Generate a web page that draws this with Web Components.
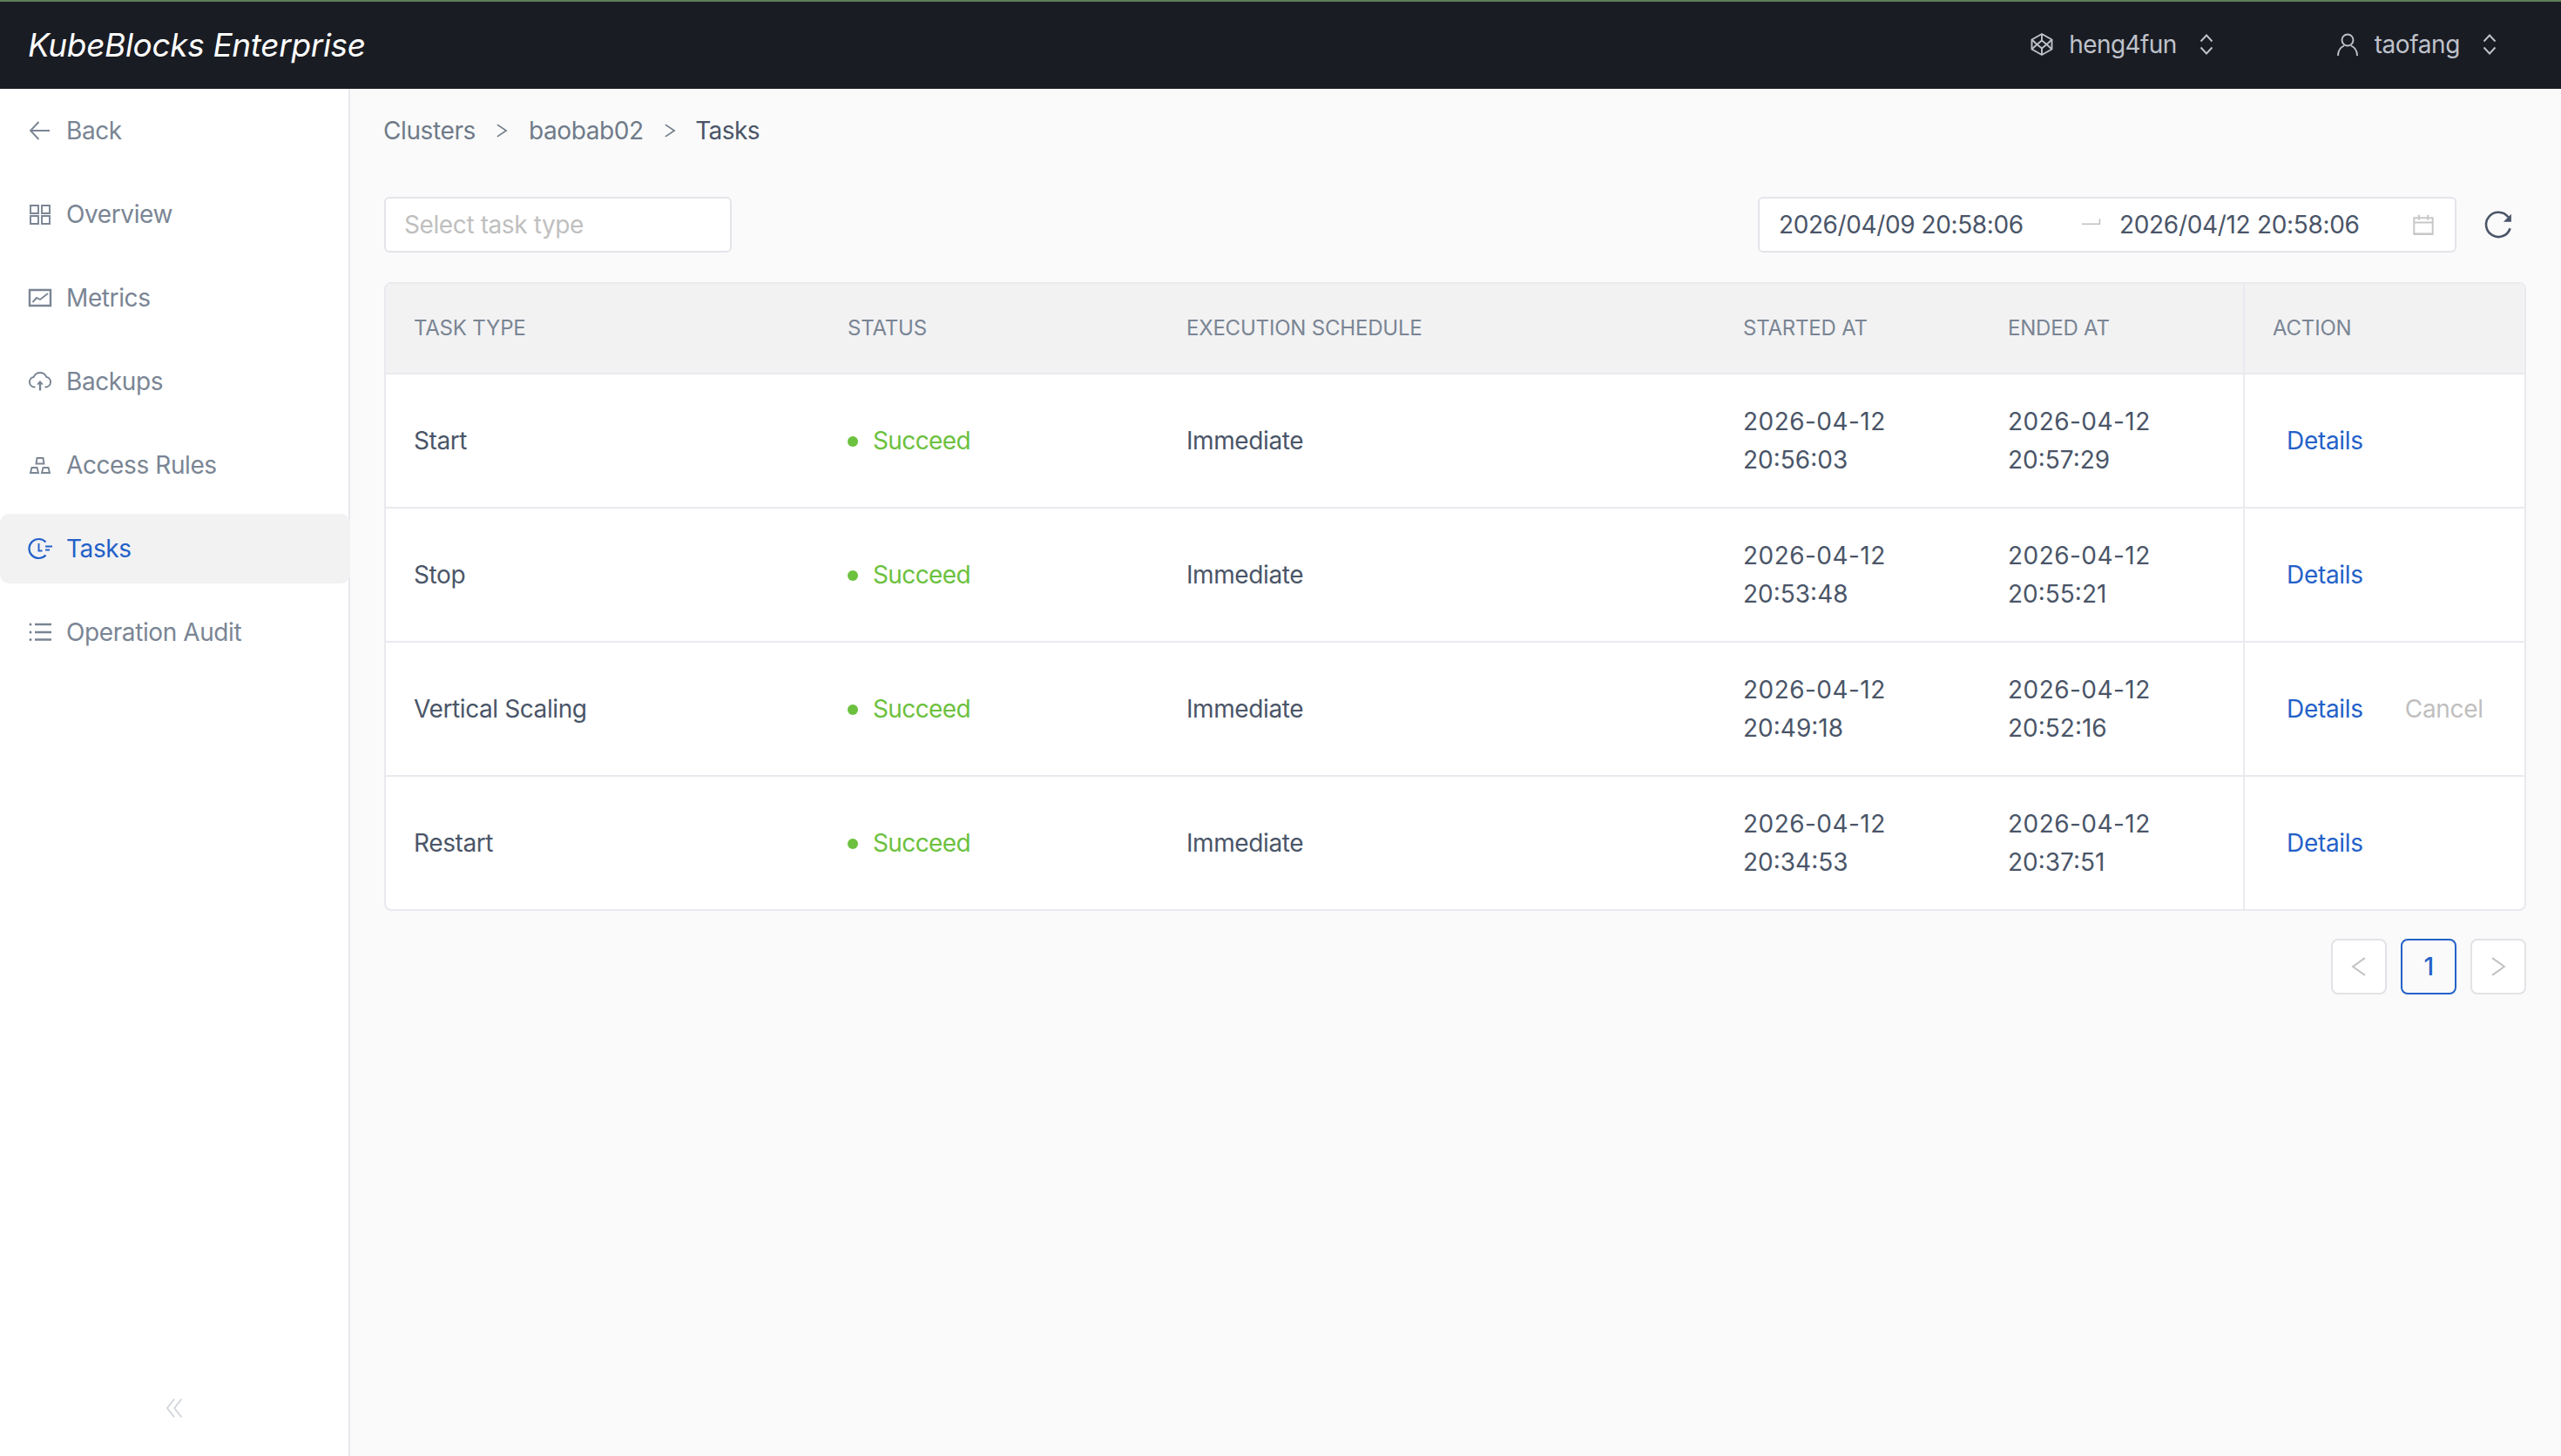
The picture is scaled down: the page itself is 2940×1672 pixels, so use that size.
<!DOCTYPE html>
<html lang="en"><head><meta charset="utf-8"><title>KubeBlocks Enterprise</title>
<style>
html,body{margin:0;padding:0;width:2940px;height:1672px;overflow:hidden;background:#fafafa}
body{font:400 28px/44px Inter,"Liberation Sans",sans-serif;letter-spacing:-.4px;color:#4a5568;display:flex;flex-direction:column}
</style></head><body>
<kb-topbar>
  <span slot="logo">KubeBlocks Enterprise</span>
  <kb-switcher icon="cube">heng4fun</kb-switcher>
  <kb-switcher icon="user">taofang</kb-switcher>
</kb-topbar>
<kb-layout>
  <kb-sidenav slot="side">
    <kb-nav-item icon="back">Back</kb-nav-item>
    <kb-nav-item icon="grid">Overview</kb-nav-item>
    <kb-nav-item icon="chart">Metrics</kb-nav-item>
    <kb-nav-item icon="cloud">Backups</kb-nav-item>
    <kb-nav-item icon="rules">Access Rules</kb-nav-item>
    <kb-nav-item icon="tasks" active>Tasks</kb-nav-item>
    <kb-nav-item icon="list">Operation Audit</kb-nav-item>
  </kb-sidenav>
  <kb-breadcrumb>
    <span>Clusters</span><span>baobab02</span><span>Tasks</span>
  </kb-breadcrumb>
  <kb-filters>
    <kb-select>Select task type</kb-select>
    <kb-range from="2026/04/09 20:58:06" to="2026/04/12 20:58:06"></kb-range>
  </kb-filters>
  <kb-table>
    <kb-row head>
      <span>Task Type</span><span>Status</span><span>Execution Schedule</span><span>Started At</span><span>Ended At</span><span>Action</span>
    </kb-row>
    <kb-row><span>Start</span><kb-status>Succeed</kb-status><span>Immediate</span><kb-time d="2026-04-12" t="20:56:03"></kb-time><kb-time d="2026-04-12" t="20:57:29"></kb-time><kb-actions></kb-actions></kb-row>
    <kb-row><span>Stop</span><kb-status>Succeed</kb-status><span>Immediate</span><kb-time d="2026-04-12" t="20:53:48"></kb-time><kb-time d="2026-04-12" t="20:55:21"></kb-time><kb-actions></kb-actions></kb-row>
    <kb-row><span>Vertical Scaling</span><kb-status>Succeed</kb-status><span>Immediate</span><kb-time d="2026-04-12" t="20:49:18"></kb-time><kb-time d="2026-04-12" t="20:52:16"></kb-time><kb-actions cancel></kb-actions></kb-row>
    <kb-row last><span>Restart</span><kb-status>Succeed</kb-status><span>Immediate</span><kb-time d="2026-04-12" t="20:34:53"></kb-time><kb-time d="2026-04-12" t="20:37:51"></kb-time><kb-actions></kb-actions></kb-row>
  </kb-table>
  <kb-pagination></kb-pagination>
</kb-layout>
<script>
const ICONS={
 back:'<path d="M25 14H3.500M12.500 4 3 14l9.500 10"/>',
 grid:'<path d="M3 4h9v9H3zM16 4h9v9h-9zM3 16h9v9H3zM16 16h9v9h-9z"/>',
 chart:'<path d="M2 5h24v18H2z" stroke-width="2.400"/><path d="M5.500 19l4.500-5 4 2 9-7"/>',
 cloud:'<path d="M8.500 20.500H7.500a5.800 5.800 0 0 1-.8-11.500 7.800 7.800 0 0 1 14.600 0A5.800 5.800 0 0 1 20.500 20.500h-1"/><path d="M14 24.500V14" stroke-width="2.400"/><path d="M10 17.500 14 13l4 4.500z" fill="currentColor" stroke="none"/>',
 rules:'<path d="M10.500 6h7l1 6.500h-9zM3 23l1.500-6h6l1.500 6zM16 23l1.500-6h6l1.500 6z"/>',
 tasks:'<path d="M20.500 6.500A11 11 0 1 0 20.500 21.500" stroke-width="2.200"/><path d="M12.500 8v8.500h4M20 11.500h8M20 15.500h5"/>',
 list:'<path d="M8 5h19M8 14h19M8 22.500h19" stroke-width="2.400"/><circle cx="3" cy="5" r="1.500" fill="currentColor" stroke="none"/><circle cx="3" cy="14" r="1.500" fill="currentColor" stroke="none"/><circle cx="3" cy="22.500" r="1.500" fill="currentColor" stroke="none"/>',
 cube:'<path d="M14 2 25.500 8.500v11L14 26 2.500 19.500v-11z"/><path d="M14 2v7.500L8.500 14l5.500 4.500 5.500-4.500L14 9.500M2.500 8.500 8.500 14l-6 5.500M25.500 8.500l-6 5.500 6 5.500M14 18.500V26"/>',
 user:'<circle cx="14" cy="9" r="6.500"/><path d="M3 27c0-6 3.500-10 7-11.500M25 27c0-6-3.500-10-7-11.500"/>',
 updown:'<path d="M7.500 10.500 14 3.500l6.500 7M7.500 17.500l6.500 7 6.500-7"/>',
 sep:'<path d="M8 6l12 8-12 8"/>',
 calendar:'<path d="M1.500 5h25v21.500h-25z"/><path d="M1.500 11h25M8 1v7M20 1v7"/><path d="M1.500 26.500h25" stroke-width="2.800"/>',
 refresh:'<path d="M26.700 7.800A13.300 13.300 0 1 0 28.800 20" /><path d="M30 4.500V13h-8.500z" fill="currentColor" stroke="none"/>',
 rangearrow:'<path d="M1 12h24v-7"/>',
 prev:'<path d="M22 2.500 6 14l16 11.500"/>',
 next:'<path d="M6 2.500 22 14 6 25.500"/>',
 collapse:'<path d="M13 2 3.500 14 13 26M22.500 2 13 14l9.500 12"/>'
};
function icon(name,size=28,sw=1.9){const vb=name==='refresh'?32:28;return `<svg xmlns="http://www.w3.org/2000/svg" width="${size}" height="${size}" viewBox="0 0 ${vb} ${vb}" fill="none" stroke="currentColor" stroke-width="${sw*vb/size}" aria-hidden="true" style="display:block;flex:none">${ICONS[name]}</svg>`}
function def(tag,html){customElements.define(tag,class extends HTMLElement{
  connectedCallback(){if(this.shadowRoot)return;const r=this.attachShadow({mode:'open'});r.innerHTML=typeof html==='function'?html(this):html;}
})}
def('kb-topbar',`<style>
:host{display:flex;flex:none;align-items:center;height:100px;background:#1a1c23;border-top:2px solid #5e7f57}
.logo{font:italic 400 37px/1 Inter,sans-serif;color:#fff;margin-left:32px;letter-spacing:-.35px;transform:translateY(-1px)}
.right{margin-left:auto;display:flex}
</style><div class="logo"><slot name="logo"></slot></div><div class="right"><slot></slot></div>`);
def('kb-switcher',h=>`<style>
:host{display:flex;align-items:center;color:#bfc2cb;height:44px;transform:translateY(-1px)}
:host([icon=cube]){margin-right:134px;letter-spacing:-.6px}
:host([icon=user]){margin-right:68px}
.i{margin-right:17px}.c{margin-left:20px}
</style><span class="i">${icon(h.getAttribute('icon'))}</span><slot></slot><span class="c">${icon('updown')}</span>`);
def('kb-layout',`<style>
:host{display:flex;flex:1;min-height:0}
main{flex:1;min-width:0;padding:8px 40px 0 39px;display:flex;flex-direction:column}
</style><slot name="side"></slot><main><slot></slot></main>`);
def('kb-sidenav',`<style>
:host{display:flex;flex-direction:column;flex:none;width:400px;background:#fff;border-right:2px solid #e9e9ef;padding-top:8px}
nav{display:flex;flex-direction:column;gap:16px}
.collapse{margin-top:auto;display:flex;justify-content:center;padding:0 0 43px 2px;color:#d3d7dc}
</style><nav><slot></slot></nav><div class="collapse">${icon('collapse',24)}</div>`);
def('kb-nav-item',h=>`<style>
:host{display:flex;align-items:center;height:80px;padding-left:32px;gap:16px;color:#7a8594;border-radius:10px;margin-right:-2px;position:relative}
:host([active]){background:#f2f2f3;color:#2461c8}
</style>${icon(h.getAttribute('icon'))}<slot></slot>`);
def('kb-breadcrumb',h=>{[...h.children].forEach((k,i)=>k.slot='c'+i);return `<style>
:host{display:flex;align-items:center;height:80px;color:#6f7b89;margin-left:-1px}
.s{margin:0 18.500px}.s.b{margin-right:17px}.last{color:#4a5568;letter-spacing:-.6px}
</style><slot name="c0"></slot><span class="s">${icon('sep',24,1.6)}</span><slot name="c1"></slot><span class="s b">${icon('sep',24,1.6)}</span><span class="last"><slot name="c2"></slot></span>`});
def('kb-filters',`<style>:host{display:flex;align-items:center;justify-content:space-between;margin-top:36px;height:64px}</style><slot></slot>`);
def('kb-select',`<style>
:host{display:flex;align-items:center;box-sizing:border-box;width:399px;height:64px;padding-left:21px;background:#fff;border:2px solid #e4e4ea;border-radius:6px;color:#bfbfbf}
</style><slot></slot>`);
def('kb-range',h=>`<style>
:host{display:flex;align-items:center}
.box{display:flex;align-items:center;box-sizing:border-box;width:802px;height:64px;padding-left:22px;background:#fff;border:2px solid #e4e4ea;border-radius:6px;color:#4a5568}
.a{width:347px}.b{width:336px;letter-spacing:-.32px}
.arrow{color:#c2c2c2;margin-right:20px;transform:translateY(1px)}
.cal{color:#c8c8c8;margin-left:1px}
.re{width:64px;margin-left:16px;display:flex;justify-content:center;color:#4a5568}
</style><div class="box"><span class="a">${h.getAttribute('from')}</span><span class="arrow">${icon('rangearrow',24,1.6)}</span><span class="b">${h.getAttribute('to')}</span><span class="cal">${icon('calendar',24,2)}</span></div><span class="re">${icon('refresh',34,2.600)}</span>`);
def('kb-table',`<style>
:host{display:block;margin-top:34px;border:2px solid #e9e9ef;border-radius:8px;overflow:hidden;background:#fff;--cols:498px 389px 639px 304px 302px 1fr}
</style><slot></slot>`);
def('kb-row',h=>{const head=h.hasAttribute('head');[...h.children].forEach((k,i)=>k.slot='c'+i);return `<style>
:host{display:grid;grid-template-columns:var(--cols);height:${head?102:152}px;border-bottom:2px solid #e9e9ef;align-items:stretch}
:host([last]){border-bottom:0}
:host([head]){background:#f2f2f3;color:#7a8594;font-size:24px;letter-spacing:-.2px;text-transform:uppercase}
.c{display:flex;align-items:center;padding-left:32px;min-width:0}
.c.act{border-left:2px solid #e9e9ef}
</style>${[0,1,2,3,4,5].map(i=>`<div class="c${i==5?' act':''}"><div><slot name="c${i}"></slot></div></div>`).join('')}`});
def('kb-time',h=>`<style>
:host{display:block}
.d{display:block;letter-spacing:.45px}.t{display:block;letter-spacing:0}
</style><span class="d">${h.getAttribute('d')}</span><span class="t">${h.getAttribute('t')}</span>`);
def('kb-status',`<style>
:host{display:flex;align-items:center;color:#6cc13e;letter-spacing:-.6px}
i{width:12px;height:12px;border-radius:50%;background:#6cc13e;margin-right:17px;flex:none;transform:translateY(1px)}
</style><i></i><slot></slot>`);
def('kb-actions',h=>`<style>
:host{display:flex;align-items:center;padding-left:16px;gap:48px;color:#2461c8;letter-spacing:-.3px}
.x{color:#bfbfbf}
</style><span>Details</span>${h.hasAttribute('cancel')?'<span class="x">Cancel</span>':''}`);
def('kb-pagination',`<style>
:host{display:flex;justify-content:flex-end;gap:16px;margin-top:32px}
div{box-sizing:border-box;width:64px;height:64px;border:2px solid #e2e2e7;border-radius:8px;background:#fff;display:flex;align-items:center;justify-content:center;color:#c2c2c2}
.on{border-color:#2461c8;color:#2461c8;font-weight:500;background:#fafafa}
</style><div>${icon('prev',24,2)}</div><div class="on">1</div><div>${icon('next',24,2)}</div>`);
</script>
</body></html>
